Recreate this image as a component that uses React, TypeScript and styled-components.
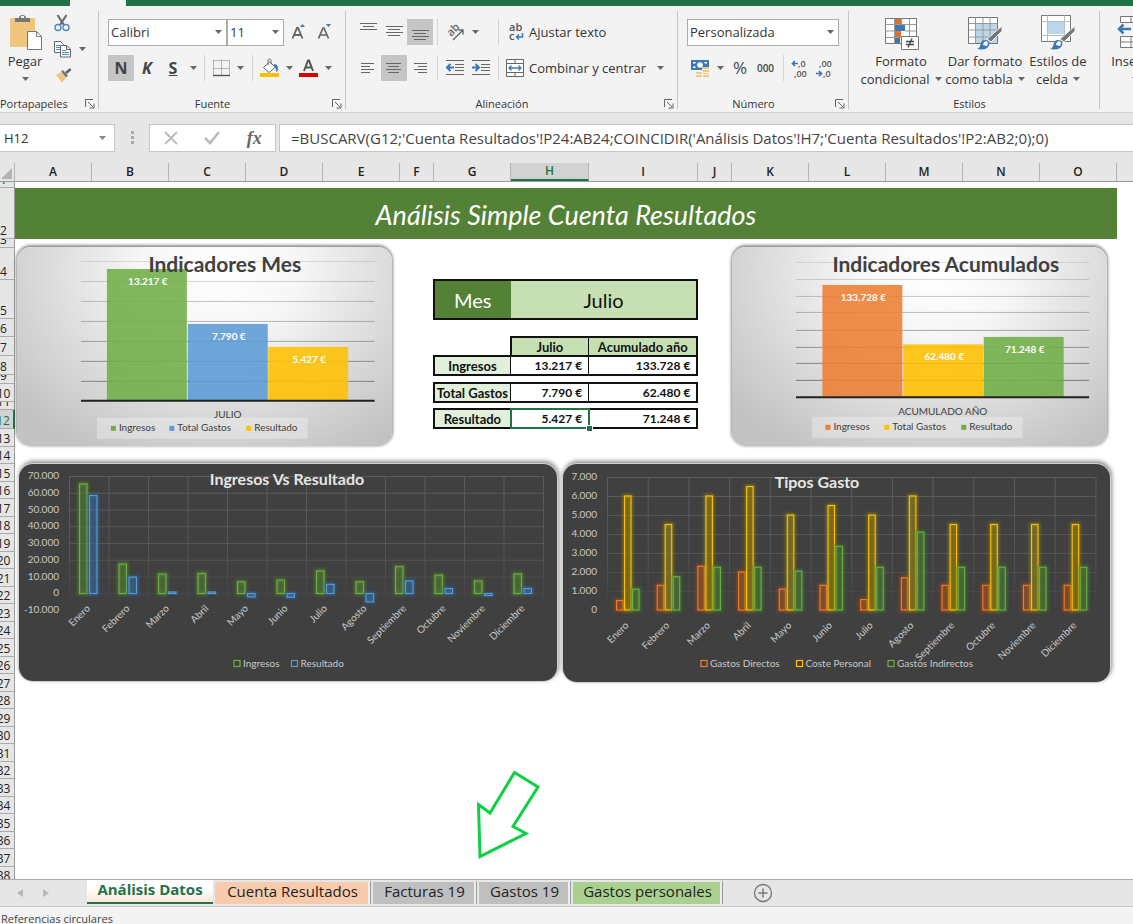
import React from "react";
import styled, { createGlobalStyle } from "styled-components";

const UI = '"Open Sans", "Noto Sans", sans-serif';
const CELL = 'Lato, "Open Sans", sans-serif';

const Global = createGlobalStyle`
  * { box-sizing: border-box; }
  body { margin: 0; background: #e6e6e6; font-family: ${UI}; color: #333; }
  button, input, select { font: inherit; color: inherit; margin: 0; }
`;

const Workbook = styled.div`
  display: flex;
  flex-direction: column;
  height: 100vh;
  overflow: hidden;
`;

/* ---------- ribbon ---------- */

const TitleStrip = styled.div`
  display: flex;
  flex: none;
  height: 6px;
  background: #217346;
  padding-left: 70px;
`;

const OpenTab = styled.div`
  width: 56px;
  background: #f3f3f3;
`;

const Ribbon = styled.div`
  display: flex;
  flex: none;
  height: 107px;
  background: #f3f3f3;
  border-bottom: 1px solid #d2d2d2;
  padding: 5px 0 0;
  overflow: hidden;
`;

const Group = styled.section<{ $w: number }>`
  display: flex;
  flex-direction: column;
  flex: none;
  width: ${(p) => p.$w}px;
  height: 98px;
  border-right: 1px solid #c6c6c6;
`;

const GroupBody = styled.div<{ $pad: number; $top?: number }>`
  display: flex;
  flex: none;
  height: 85px;
  padding: ${(p) => p.$top ?? 8}px 0 0 ${(p) => p.$pad}px;
`;

const Rows = styled.div`
  display: flex;
  flex-direction: column;
  gap: 10px;
`;

const Row = styled.div`
  display: flex;
  align-items: center;
  height: 26px;
`;

const GroupFoot = styled.div`
  display: flex;
  align-items: center;
  justify-content: center;
  height: 16px;
  padding: 0 3px 0 0;
  font-size: 11px;
  line-height: 16px;
  color: #333;
`;

const FootLabel = styled.span<{ $left?: boolean }>`
  flex: 1;
  padding-right: 6px;
  white-space: nowrap;
  text-align: ${(p) => (p.$left ? "left" : "center")};
`;

const Tool = styled.button<{ $w?: number; $h?: number; $on?: boolean }>`
  display: flex;
  align-items: center;
  justify-content: center;
  flex: none;
  width: ${(p) => p.$w ?? 26}px;
  height: ${(p) => p.$h ?? 26}px;
  padding: 0;
  border: 0;
  background: ${(p) => (p.$on ? "#c5c5c5" : "transparent")};
  font-size: 16px;
  line-height: 20px;
  font-weight: 700;
  color: #444;
`;

const TextTool = styled.button`
  display: flex;
  align-items: center;
  gap: 5px;
  height: 26px;
  padding: 0;
  border: 0;
  background: transparent;
  font-size: 13px;
  line-height: 18px;
  color: #333;
  white-space: nowrap;
`;

const Sep = styled.span<{ $l: number; $r: number }>`
  flex: none;
  width: 1px;
  height: 26px;
  margin: 0 ${(p) => p.$r}px 0 ${(p) => p.$l}px;
  background: #d4d4d4;
`;

const Picker = styled.label<{ $w: number }>`
  display: grid;
  grid-template-columns: 1fr 16px;
  align-items: center;
  flex: none;
  width: ${(p) => p.$w}px;
  height: 27px;
  border: 1px solid #ababab;
  background: #fff;
  select, input {
    grid-area: 1 / 1 / 2 / 3;
    width: 100%;
    height: 25px;
    padding: 0 0 0 2px;
    border: 0;
    outline: 0;
    background: transparent;
    appearance: none;
    font-size: 13px;
    color: #333;
  }
  svg { grid-area: 1 / 2; justify-self: center; pointer-events: none; }
`;

const BigTool = styled.button<{ $w: number }>`
  display: flex;
  flex-direction: column;
  align-items: center;
  flex: none;
  width: ${(p) => p.$w}px;
  height: 80px;
  padding: 3px 0 0;
  border: 0;
  background: transparent;
  font-size: 13px;
  line-height: 18px;
  color: #333;
  white-space: nowrap;
  svg { flex: none; }
`;

const BigLine = styled.span`
  display: flex;
  align-items: center;
  gap: 5px;
`;

const CaretLine = styled(BigLine)`
  height: 18px;
`;

const Stack = styled.div`
  display: flex;
  flex-direction: column;
  gap: 2px;
`;

const StackRow = styled(Row)`
  height: 24px;
`;

const PercentText = styled.span`
  font-size: 17px;
  line-height: 20px;
  font-weight: 400;
`;

const ThousandText = styled.span`
  font-size: 10px;
  line-height: 14px;
  font-weight: 600;
`;

const Caret = ({ c = "#666" }: { c?: string }) => (
  <svg width="7" height="4" viewBox="0 0 7 4"><path d="M0 0h7L3.5 4z" fill={c} /></svg>
);

const Launcher = () => (
  <svg width="10" height="10" viewBox="0 0 10 10" fill="none" stroke="#666">
    <path d="M.5 8V.5H8M3 3l5 5M9 4.500V9H4.500" />
  </svg>
);

const Lines = ({ spec }: { spec: [number, number, number][] }) => (
  <svg width="20" height="20" viewBox="0 0 20 20" stroke="#666">
    {spec.map(([x, y, w], i) => <path key={i} d={`M${x} ${y}.5h${w}`} />)}
  </svg>
);

const PasteIcon = () => (
  <svg width="36" height="38" viewBox="0 0 36 38">
    <path d="M3 4h25v29H3z" fill="#eec67e" />
    <path d="M8 8V4h4c0-4 7-4 7 0h4v4z" fill="#777" />
    <rect x="14" y="2" width="3" height="2" fill="#f3f3f3" />
    <path d="M20.500 17.500h9l5 5v13h-14z" fill="#fff" stroke="#777" />
    <path d="M29.500 17.500v5h5" fill="none" stroke="#777" />
  </svg>
);

const CutIcon = () => (
  <svg width="16" height="18" viewBox="0 0 16 18" fill="none">
    <path d="M3.500 1l6.500 10M12.500 1L6 11" stroke="#666" strokeWidth="2" />
    <circle cx="4" cy="13.500" r="3" stroke="#4a8ac4" strokeWidth="1.400" />
    <circle cx="12" cy="13.500" r="3" stroke="#4a8ac4" strokeWidth="1.400" />
  </svg>
);

const CopyIcon = () => (
  <svg width="17" height="18" viewBox="0 0 17 18" fill="#fff" stroke="#666">
    <path d="M.5 1.500h6l3 3v8h-9z" />
    <path d="M2 5.500h4M2 7.500h4M2 9.500h4" stroke="#4a8ac4" />
    <path d="M6.500 5.500h6l4 3.500v8h-10z" />
    <path d="M12.500 5.500v4h4" fill="none" />
    <path d="M8 10.500h4M8 12.500h7M8 14.500h7" stroke="#4a8ac4" />
  </svg>
);

const BrushIcon = () => (
  <svg width="17" height="16" viewBox="0 0 17 16">
    <path d="M1 8l5-3 5 6-4 4.500z" fill="#eec67e" />
    <path d="M6 4.500l2-1.500 5 5.500-2 2z" fill="#777" />
    <path d="M10 5l5-4 1.500 2-4.500 4z" fill="#666" />
  </svg>
);

const GrowIcon = ({ up }: { up?: boolean }) => (
  <svg width="16" height="18" viewBox="0 0 16 18">
    <path d="M2.500 15.500L7 5h1l4.500 10.500M4.500 12h6" fill="none" stroke="#666" strokeWidth={up ? 1.9 : 1.7} />
    <path d={up ? "M10 4h5l-2.500-3z" : "M10 1h5l-2.500 3z"} fill="#3c78b4" />
  </svg>
);

const BordersIcon = () => (
  <svg width="17" height="17" viewBox="0 0 17 17" fill="none" stroke="#777">
    <path d="M.5 .5h16M.5 .5v15M16.500 .5v15M8.500 .5v15M.5 8.500h16" strokeDasharray="1 1" />
    <path d="M0 15.500h17" stroke="#555" strokeWidth="1.400" />
  </svg>
);

const FillIcon = () => (
  <svg width="20" height="20" viewBox="0 0 20 20">
    <path d="M3.500 9.500l6-5.500 6 5-6.500 5.500z" fill="#fff" stroke="#666" />
    <path d="M8 7V2.500c0-2 3-2 3 0V6" fill="none" stroke="#666" />
    <path d="M14 6c4 0 5 4 3 8-2-1 0-4-3-5z" fill="#3c78b4" />
    <path d="M0 15h19v4H0z" fill="#f7c000" />
  </svg>
);

const FontColorIcon = () => (
  <svg width="20" height="20" viewBox="0 0 20 20">
    <path d="M5 13L9 2.500h1L14 13M6.500 9.500h6" fill="none" stroke="#555" strokeWidth="2" />
    <path d="M0 15h19v4H0z" fill="#d80000" />
  </svg>
);

const AngleIcon = () => (
  <svg width="22" height="22" viewBox="-2 -2 22 22">
    <text x="0" y="0" transform="translate(5 14) rotate(-45)" fontSize="11" fontWeight="600" fill="#666">ab</text>
    <path d="M7 17L17 7M12.500 7H17v4.500" fill="none" stroke="#666" strokeWidth="1.400" />
  </svg>
);

const WrapIcon = () => (
  <svg width="16" height="24" viewBox="0 -2 16 24">
    <text x="1" y="9" fontSize="11" fontWeight="600" fill="#555">ab</text>
    <text x="1" y="18" fontSize="11" fontWeight="600" fill="#555">c</text>
    <path d="M14.500 11v4H8.500M11 12.500L8.500 15l2.500 2.500" fill="none" stroke="#3c78b4" strokeWidth="1.500" />
  </svg>
);

const MergeIcon = () => (
  <svg width="18" height="19" viewBox="0 0 18 19" fill="none" stroke="#666">
    <path d="M.5 .5h17v17H.5z" fill="#fff" />
    <path d="M.5 4.500h17M.5 13.500h17M9 .5v4M9 13.500v4" />
    <path d="M3 9h12M5.500 6.500L3 9l2.500 2.500M12.500 6.500L15 9l-2.500 2.500" stroke="#3c78b4" strokeWidth="1.300" />
  </svg>
);

const IndentIcon = ({ out }: { out?: boolean }) => (
  <svg width="18" height="18" viewBox="0 0 18 18" stroke="#666" fill="none">
    <path d="M0 1.500h18M9 5.500h9M9 8.500h9M9 11.500h9M0 15.500h18" />
    <path d={out ? "M8 8.500H1.500M4.500 5L1 8.500 4.500 12" : "M0 8.500h6.500M3.500 5L7 8.500 3.500 12"} stroke="#3c78b4" strokeWidth="2" />
  </svg>
);

const MoneyIcon = () => (
  <svg width="20" height="19" viewBox="0 0 20 19">
    <path d="M1 1h18v10H1z" fill="#3c78b4" />
    <path d="M3 3h2.500v1.500H3zM14.500 3H17v1.500h-2.500zM3 7.500h2.500V9H3z" fill="#fff" />
    <circle cx="10" cy="6" r="2.800" fill="#fff" />
    <path d="M12 8h7v10h-6v-6h-1zM6 13h6v5H6z" fill="#f3c98b" />
    <path d="M12 10.500h7M12 13.500h7M6 15.500h13M12.500 12v6" stroke="#f3f3f3" />
  </svg>
);

const DecimalIcon = ({ add }: { add?: boolean }) => (
  <svg width="20" height="22" viewBox="0 -2 20 22">
    <text x={add ? 7 : 3} y="8" fontSize="9" fontWeight="600" fill="#555">{add ? ",0" : ",00"}</text>
    <text x={add ? 3 : 7} y="18" fontSize="9" fontWeight="600" fill="#555">{add ? ",00" : ",0"}</text>
    <path
      d={add ? "M7 4.500H1.500M4 2L1.500 4.500 4 7" : "M0 14.500h5.500M3 12l2.500 2.500L3 17"}
      fill="none" stroke="#3c78b4" strokeWidth="1.700"
    />
  </svg>
);

const CondIcon = () => (
  <svg width="36" height="38" viewBox="0 0 36 38">
    <path d="M2.500 4.500h31v25h-31z" fill="#fff" stroke="#777" />
    <path d="M12 5h6v6h-6zM12 17h6v6h-6z" fill="#e07030" />
    <path d="M12 11h10v6H12zM12 23h5v6h-5z" fill="#3c78b4" />
    <path d="M2.500 10.500h31M2.500 17h9M22 17h11M2.500 23.500h31M11.500 4.500v25M18.500 4.500v6M26.500 4.500v25" stroke="#999" fill="none" />
    <path d="M18.500 22.500h17v13h-17z" fill="#fff" stroke="#777" />
    <path d="M23 27.500h8M23 30.500h8M29 24.500l-4 9" stroke="#444" strokeWidth="1.300" />
  </svg>
);

const Brush = () => (
  <>
    <path d="M35 12v5L24 28l-4-3z" fill="#777" stroke="#f3f3f3" />
    <path d="M10 35c5-1 2-9 8-9 5 0 6 5 2 8-3 2-7 1.500-10 1z" fill="#3c78b4" />
    <path d="M17 28c3-2 5 0 3 4l-4-1z" fill="#fff" />
  </>
);

const TableIcon = () => (
  <svg width="36" height="38" viewBox="0 0 36 38">
    <path d="M1.500 3.500h29v26h-29z" fill="#fff" stroke="#777" />
    <path d="M9 10h21v19H9z" fill="#bdd7ea" />
    <path d="M1.500 9.500h29M1.500 16h29M1.500 23h29M8.500 3.500v26M16 3.500v26M23 3.500v26" stroke="#999" fill="none" />
    <Brush />
  </svg>
);

const CellIcon = () => (
  <svg width="36" height="38" viewBox="0 0 36 38">
    <path d="M1.500 1.500h29v26h-29z" fill="#fff" stroke="#777" />
    <path d="M1.500 7.500h29M1.500 21.500h29M7.500 1.500v26M24.500 1.500v26" stroke="#bbb" />
    <path d="M8 8h16v12H8z" fill="#bdd7ea" />
    <Brush />
  </svg>
);

const InsertIcon = () => (
  <svg width="36" height="38" viewBox="0 0 36 38" fill="#fff" stroke="#777">
    <path d="M3.500 2.500h32v6h-32zM3.500 22.500h32v11h-32zM3.500 28h32M14 2.500v6M14 22.500v11" />
    <path d="M17 11.500h18v8H17z" fill="#bdd7ea" />
    <path d="M14 15H2M6.500 10.500L2 15l4.500 4.500" fill="none" stroke="#3c78b4" strokeWidth="2.500" />
  </svg>
);

/* ---------- formula bar ---------- */

const FormulaBar = styled.div`
  display: flex;
  align-items: center;
  flex: none;
  height: 50px;
  padding-bottom: 1px;
  background: #e6e6e6;
`;

const NameBox = styled(Picker)`
  height: 28px;
  border-color: #c6c6c6;
  border-left: 0;
  grid-template-columns: 1fr 24px;
  input { padding-left: 4px; }
`;

const Grip = styled.span`
  display: flex;
  justify-content: center;
  width: 34px;
`;

const FxBox = styled.div`
  display: flex;
  align-items: center;
  justify-content: space-around;
  flex: none;
  width: 127px;
  height: 28px;
  border: 1px solid #c6c6c6;
  background: #fff;
`;

const FxName = styled.span`
  font: italic 700 18px/20px "Liberation Serif", serif;
  color: #666;
`;

const Formula = styled.input`
  flex: 1;
  min-width: 0;
  height: 28px;
  margin-left: 3px;
  padding: 0 0 0 11px;
  border: 1px solid #c6c6c6;
  border-right: 0;
  outline: 0;
  background: #fff;
  && {
    margin-left: 3px;
    font-size: 15px;
    color: #444;
  }
`;

/* ---------- sheet ---------- */

const ColHeads = styled.div`
  display: grid;
  grid-template-columns: 15px repeat(5, 77px) 34px 77px 78px 109px 34px repeat(5, 77px) 1fr;
  flex: none;
  height: 19px;
  border-bottom: 1px solid #9b9b9b;
  overflow: hidden;
`;

const ColHead = styled.div<{ $on?: boolean }>`
  display: flex;
  align-items: center;
  justify-content: center;
  border-right: 1px solid #b4b4b4;
  border-bottom: ${(p) => (p.$on ? "2px solid #217346" : "0")};
  background: ${(p) => (p.$on ? "#d2d2d2" : "transparent")};
  font-size: 12px;
  line-height: 16px;
  font-weight: 600;
  color: ${(p) => (p.$on ? "#217346" : "#222")};
`;

const Corner = styled(ColHead)`
  align-items: flex-end;
  justify-content: flex-end;
  padding: 0 2px 2px 0;
`;

const SheetArea = styled.div`
  display: flex;
  flex: 1;
  min-height: 0;
  overflow: hidden;
  background: #fff;
`;

const RowHeads = styled.div`
  flex: none;
  width: 15px;
  background: #e6e6e6;
`;

const RowHead = styled.div<{ $h: number; $on?: boolean }>`
  display: flex;
  align-items: flex-end;
  justify-content: center;
  height: ${(p) => p.$h}px;
  padding-right: 7px;
  overflow: hidden;
  border-bottom: 1px solid #ababab;
  border-right: ${(p) => (p.$on ? "2px solid #217346" : "1px solid #9b9b9b")};
  background: ${(p) => (p.$on ? "#d2d2d2" : "transparent")};
  color: ${(p) => (p.$on ? "#217346" : "#222")};
  font-size: 12px;
  line-height: 15px;
`;

const Dashboard = styled.main`
  display: flex;
  flex-direction: column;
  flex: 1;
  min-width: 0;
  padding: 6px 16px 0 0;
`;

const Banner = styled.h1`
  flex: none;
  margin: 0;
  height: 51px;
  background: #538135;
  color: #fff;
  font: italic 400 27px/54px Lato, sans-serif;
  text-align: center;
`;

const Upper = styled.div`
  display: flex;
  justify-content: space-between;
  align-items: flex-start;
  padding: 8px 10px 0 2px;
`;

const Lower = styled.div`
  display: flex;
  align-items: flex-start;
  gap: 6px;
  padding: 18px 7px 0 4px;
`;

const LightCard = styled.figure`
  flex: 375 1 0;
  margin: 0;
  border-radius: 14px;
  overflow: hidden;
  background: radial-gradient(ellipse 70% 105% at 54% 12%, #fff 0%, #f6f6f6 30%, #d4d4d4 75%, #c2c2c2 100%);
  box-shadow: 0 -1px 3px 1px rgba(0, 0, 0, 0.45);
  svg { display: block; width: 100%; height: auto; }
`;

const DarkCard = styled(LightCard)<{ $grow: number }>`
  flex-grow: ${(p) => p.$grow};
  background: #404040;
  box-shadow: 0 0 0 1px #d0d0d0, 1px -2px 4px 1px rgba(0, 0, 0, 0.45);
`;

const Tables = styled.div`
  flex: 266 1 0;
  margin: 32px 34px 0 41px;
`;

const Month = styled.table`
  width: 100%;
  table-layout: fixed;
  border-collapse: collapse;
  border: 2px solid #111;
  font: 400 20px/24px ${CELL};
  color: #111;
  th, td { height: 39px; padding: 0; text-align: center; font-weight: 400; }
  th { width: 77px; background: #538135; color: #fff; }
  td { background: #c6e0b4; }
`;

const Summary = styled.table`
  width: 100%;
  margin-top: 16px;
  table-layout: fixed;
  border-collapse: collapse;
  font: 700 12px/14px ${CELL};
  color: #111;
  th { font-size: 13px; }
`;

const Line = styled.tr<{ $h: number }>`
  height: ${(p) => p.$h}px;
`;

const Head = styled.th`
  padding: 0;
  border: 2px solid #111;
  border-right-width: 1px;
  background: #c6e0b4;
  & + & { border-left-width: 1px; border-right-width: 2px; }
`;

const Name = styled.th`
  padding: 0;
  border: 2px solid #111;
  border-right-width: 1px;
  background: #e2efda;
  white-space: nowrap;
`;

const Value = styled.td<{ $last?: boolean }>`
  position: relative;
  padding: 0 6px 0 0;
  border: solid #111;
  border-width: 2px ${(p) => (p.$last ? 2 : 1)}px 2px 1px;
  text-align: right;
`;

const Selection = styled.span`
  position: absolute;
  inset: -2px -2px -2px -1px;
  border: 2px solid #217346;
  &::after {
    content: "";
    position: absolute;
    right: -4px;
    bottom: -4px;
    width: 5px;
    height: 5px;
    background: #217346;
    outline: 1px solid #fff;
  }
`;

const Blank = styled.td`
  padding: 0;
`;

const Pointer = styled.svg`
  display: block;
  flex: none;
  margin: 86px 0 0 459px;
`;

/* ---------- bottom ---------- */

const TabBar = styled.nav`
  display: flex;
  flex: none;
  height: 28px;
  background: #e6e6e6;
  border-top: 1px solid #ababab;
  border-bottom: 1px solid #c6c6c6;
`;

const TabNav = styled.div`
  display: flex;
  align-items: center;
  gap: 20px;
  width: 87px;
  padding-left: 17px;
`;

const SheetTab = styled.button<{ $bg: string; $w: number; $on?: boolean }>`
  flex: none;
  width: ${(p) => p.$w}px;
  height: 24px;
  padding: ${(p) => (p.$on ? "0 0 4px" : "0 0 6px")};
  border: solid #e6e6e6;
  border-width: ${(p) => (p.$on ? "0" : "2px 1px 0 2px")};
  border-right-color: #999;
  border-bottom: ${(p) => (p.$on ? "2px solid #217346" : "0")};
  box-shadow: ${(p) => (p.$on ? "none" : "inset -2px 0 #eee")};
  background: ${(p) => p.$bg};
  font-size: 15px;
  line-height: 18px;
  font-weight: ${(p) => (p.$on ? 700 : 400)};
  color: ${(p) => (p.$on ? "#217346" : "#222")};
  white-space: nowrap;
`;

const AddTab = styled.button`
  display: flex;
  margin-left: 30px;
  padding: 3px 0 0;
  border: 0;
  background: transparent;
`;

const Status = styled.footer`
  flex: none;
  height: 17px;
  padding: 4px 0 0 1px;
  overflow: hidden;
  background: #f3f3f3;
  font-size: 11px;
  line-height: 16px;
  color: #444;
`;

/* ---------- charts ---------- */

const Txt = styled.text<{ $size?: number }>`
  font-family: ${CELL};
  font-size: ${(p) => p.$size ?? 10}px;
`;

type Bar = { x: number; top: number; fill: string; label: string; name: string; lx: number };

type SummaryChartProps = {
  box: string; left: number; right: number; base: number; grid: number[];
  bars: Bar[]; title: string; titleX: number; caption: string; capX: number; capY: number; legendX: number; legendY: number;
};

function SummaryChart(p: SummaryChartProps) {
  return (
    <LightCard>
      <svg viewBox={p.box} role="img" aria-label={p.title}>
        {p.grid.map((y, i) => (
          <path key={y} d={`M${p.left} ${y}H${p.right}`} stroke="#555" strokeOpacity={0.16 + i * 0.08} />
        ))}
        {p.bars.map((b) => (
          <g key={b.name}>
            <rect x={b.x} y={b.top} width="80" height={p.base - b.top} fill={b.fill} fillOpacity="0.88" />
            <Txt x={b.x + 41} y={b.top + 16} textAnchor="middle" fontWeight="700" fill="#fff">{b.label}</Txt>
          </g>
        ))}
        <path d={`M${p.left} ${p.base + 0.5}H${p.right}`} stroke="#222" strokeWidth="2" />
        <Txt $size={21} x={p.titleX} y="272" textAnchor="middle" fontWeight="700" fill="#404040">{p.title}</Txt>
        <rect x={p.legendX} y={p.legendY - 13} width="211" height="21" fill="#f2f2f2" fillOpacity="0.4" />
        <Txt x={p.capX} y={p.capY} textAnchor="middle" fill="#404040">{p.caption}</Txt>
        {p.bars.map((b) => (
          <g key={b.name}>
            <rect x={b.lx} y={p.legendY - 5} width="5" height="5" fill={b.fill} />
            <Txt x={b.lx + 8} y={p.legendY} fill="#404040">{b.name}</Txt>
          </g>
        ))}
      </svg>
    </LightCard>
  );
}

const MONTHS = ["Enero", "Febrero", "Marzo", "Abril", "Mayo", "Junio", "Julio", "Agosto", "Septiembre", "Octubre", "Noviembre", "Diciembre"];

type Series = { name: string; color: string; glow: string; data: number[]; dx: number; lx: number };

type MonthChartProps = {
  id: string; grow: number; box: string; left: number; step: number; top: number; unit: number; ticks: string[];
  zero: number; scale: number; barW: number; series: Series[]; title: string; titleX: number; titleY: number; monthY: number;
};

function MonthChart(p: MonthChartProps) {
  const right = p.left + p.step * 12;
  const bottom = p.top + p.unit * (p.ticks.length - 1);
  return (
    <DarkCard $grow={p.grow}>
      <svg viewBox={p.box} role="img" aria-label={p.title}>
        <defs>
          <filter id={`${p.id}-glow`} x="-150%" y="-50%" width="400%" height="200%" filterUnits="objectBoundingBox">
            <feGaussianBlur stdDeviation="1.600" />
          </filter>
          <linearGradient id={`${p.id}-fade`} gradientUnits="userSpaceOnUse" x1="0" x2="0" y1={p.top} y2={bottom}>
            <stop offset="0" stopColor="#5c5c5c" />
            <stop offset="0.600" stopColor="#545454" />
            <stop offset="1" stopColor="#404040" />
          </linearGradient>
        </defs>
        <g fill={`url(#${p.id}-fade)`}>
          {p.ticks.map((t, i) => <rect key={t} x={p.left} y={p.top + p.unit * i} width={right - p.left} height="1" />)}
          {Array.from({ length: 13 }, (_, i) => (
            <rect key={i} x={p.left + p.step * i} y={p.top} width="1" height={bottom - p.top} />
          ))}
        </g>
        {p.ticks.map((t, i) => (
          <Txt key={t} x={p.left - 10} y={p.top + p.unit * i + 3} textAnchor="end" fill="#c8c8c8">{t}</Txt>
        ))}
        {p.series.map((s) =>
          s.data.map((v, i) => {
            const h = Math.max(Math.abs(v) * p.scale, 1.5);
            const box = {
              x: p.left + p.step * i + s.dx,
              y: v < 0 ? p.zero : p.zero - h,
              width: p.barW,
              height: h,
            };
            return (
              <g key={`${s.name}${i}`}>
                <rect {...box} fill={s.glow} fillOpacity="0.2" stroke={s.glow} strokeWidth="4" strokeOpacity="0.6" filter={`url(#${p.id}-glow)`} />
                <rect {...box} fill={s.color} fillOpacity="0.12" stroke={s.color} strokeWidth="1.100" />
              </g>
            );
          })
        )}
        {MONTHS.map((m, i) => (
          <Txt
            key={m}
            transform={`translate(${p.left + p.step * (i + 0.5) + 2} ${p.monthY}) rotate(-45)`}
            textAnchor="end"
            fill="#c8c8c8"
          >
            {m}
          </Txt>
        ))}
        <Txt $size={16} x={p.titleX} y={p.titleY} textAnchor="middle" fontWeight="700" fill="#e6e6e6">{p.title}</Txt>
        {p.series.map((s) => (
          <g key={s.name}>
            <rect x={s.lx} y="660.500" width="6" height="6" fill="none" stroke={s.color} strokeWidth="1.200" />
            <Txt x={s.lx + 9} y="666.500" fill="#c8c8c8">{s.name}</Txt>
          </g>
        ))}
      </svg>
    </DarkCard>
  );
}

const GREEN = "#70ad47", BLUE = "#5b9bd5", YELLOW = "#ffc000", ORANGE = "#ed7d31";

const ROW_HEIGHTS = [
  6, 51, 9, 32, 39, 18, 19, 19, 9, 18, 8, 19, 18, 17,
  ...Array.from({ length: 24 }, (_, i) => (i % 2 ? 17 : 18)),
];

export default function App() {
  return (
    <Workbook>
      <Global />
      <TitleStrip><OpenTab /></TitleStrip>
      <Ribbon>
        <Group $w={99}>
          <GroupBody $pad={5} $top={0}>
            <BigTool $w={40}>
              <PasteIcon />
              <span>Pegar</span>
              <CaretLine><Caret /></CaretLine>
            </BigTool>
            <Stack>
              <Tool $w={34} $h={24} aria-label="Cortar"><CutIcon /></Tool>
              <StackRow>
                <Tool $w={34} $h={24} aria-label="Copiar"><CopyIcon /></Tool>
                <Caret />
              </StackRow>
              <Tool $w={36} $h={24} aria-label="Copiar formato"><BrushIcon /></Tool>
            </Stack>
          </GroupBody>
          <GroupFoot><FootLabel $left>Portapapeles</FootLabel><Launcher /></GroupFoot>
        </Group>

        <Group $w={247}>
          <GroupBody $pad={9}>
            <Rows>
              <Row>
                <Picker $w={119}>
                  <select aria-label="Fuente"><option>Calibri</option></select><Caret />
                </Picker>
                <Picker $w={57}>
                  <select aria-label="Tamaño"><option>11</option></select><Caret />
                </Picker>
                <Tool $w={28} aria-label="Aumentar fuente"><GrowIcon up /></Tool>
                <Tool $w={24} aria-label="Disminuir fuente"><GrowIcon /></Tool>
              </Row>
              <Row>
                <Tool $on>N</Tool>
                <Tool><i>K</i></Tool>
                <Tool><u>S</u></Tool>
                <Tool $w={14} aria-label="Subrayado"><Caret /></Tool>
                <Sep $l={4} $r={4} />
                <Tool $w={24} aria-label="Bordes"><BordersIcon /></Tool>
                <Tool $w={14} aria-label="Más bordes"><Caret /></Tool>
                <Sep $l={5} $r={5} />
                <Tool $w={24} aria-label="Relleno"><FillIcon /></Tool>
                <Tool $w={14} aria-label="Más rellenos"><Caret /></Tool>
                <Tool $w={26} aria-label="Color de fuente"><FontColorIcon /></Tool>
                <Tool $w={12} aria-label="Más colores"><Caret /></Tool>
              </Row>
            </Rows>
          </GroupBody>
          <GroupFoot><FootLabel>Fuente</FootLabel><Launcher /></GroupFoot>
        </Group>

        <Group $w={332}>
          <GroupBody $pad={9}>
            <Rows>
              <Row>
                <Tool aria-label="Arriba"><Lines spec={[[2, 1, 17], [5, 4, 11], [2, 7, 17]]} /></Tool>
                <Tool aria-label="Medio"><Lines spec={[[2, 4, 17], [4, 7, 12], [2, 10, 17], [4, 13, 12]]} /></Tool>
                <Tool $on aria-label="Abajo"><Lines spec={[[2, 8, 17], [4, 11, 12], [2, 14, 17], [4, 17, 12]]} /></Tool>
                <Sep $l={4} $r={4} />
                <Tool $w={26} aria-label="Orientación"><AngleIcon /></Tool>
                <Tool $w={14} aria-label="Más orientación"><Caret /></Tool>
                <Sep $l={16} $r={9} />
                <TextTool><WrapIcon />Ajustar texto</TextTool>
              </Row>
              <Row>
                <Tool aria-label="Izquierda"><Lines spec={[[3, 5, 13], [3, 8, 9], [3, 11, 13], [3, 14, 9]]} /></Tool>
                <Tool $on aria-label="Centro"><Lines spec={[[2, 5, 15], [4, 8, 11], [2, 11, 15], [4, 14, 11]]} /></Tool>
                <Tool aria-label="Derecha"><Lines spec={[[4, 5, 13], [8, 8, 9], [4, 11, 13], [8, 14, 9]]} /></Tool>
                <Sep $l={4} $r={4} />
                <Tool aria-label="Disminuir sangría"><IndentIcon out /></Tool>
                <Tool aria-label="Aumentar sangría"><IndentIcon /></Tool>
                <Sep $l={4} $r={7} />
                <TextTool><MergeIcon />Combinar y centrar</TextTool>
                <Tool $w={28} aria-label="Más combinar"><Caret /></Tool>
              </Row>
            </Rows>
          </GroupBody>
          <GroupFoot><FootLabel>Alineación</FootLabel><Launcher /></GroupFoot>
        </Group>

        <Group $w={171}>
          <GroupBody $pad={9}>
            <Rows>
              <Row>
                <Picker $w={152}>
                  <select aria-label="Formato de número"><option>Personalizada</option></select><Caret />
                </Picker>
              </Row>
              <Row>
                <Tool $w={26} aria-label="Moneda"><MoneyIcon /></Tool>
                <Tool $w={14} aria-label="Más monedas"><Caret /></Tool>
                <Tool $w={26}><PercentText>%</PercentText></Tool>
                <Tool $w={25}><ThousandText>000</ThousandText></Tool>
                <Sep $l={5} $r={5} />
                <Tool $w={24} aria-label="Aumentar decimales"><DecimalIcon add /></Tool>
                <Tool $w={26} aria-label="Disminuir decimales"><DecimalIcon /></Tool>
              </Row>
            </Rows>
          </GroupBody>
          <GroupFoot><FootLabel>Número</FootLabel><Launcher /></GroupFoot>
        </Group>

        <Group $w={251}>
          <GroupBody $pad={8} $top={0}>
            <BigTool $w={88}><CondIcon /><span>Formato</span><BigLine>condicional <Caret /></BigLine></BigTool>
            <BigTool $w={80}><TableIcon /><span>Dar formato</span><BigLine>como tabla <Caret /></BigLine></BigTool>
            <BigTool $w={66}><CellIcon /><span>Estilos de</span><BigLine>celda <Caret /></BigLine></BigTool>
          </GroupBody>
          <GroupFoot><FootLabel>Estilos</FootLabel></GroupFoot>
        </Group>

        <Group $w={80}>
          <GroupBody $pad={8} $top={0}>
            <BigTool $w={54}><InsertIcon /><span>Insertar</span><CaretLine><Caret /></CaretLine></BigTool>
          </GroupBody>
        </Group>
      </Ribbon>

      <FormulaBar>
        <NameBox $w={115}>
          <input aria-label="Cuadro de nombres" defaultValue="H12" /><Caret c="#888" />
        </NameBox>
        <Grip>
          <svg width="3" height="14" viewBox="0 0 3 14" fill="#aaa"><path d="M0 0h3v3H0zM0 5h3v3H0zM0 10h3v3H0z" /></svg>
        </Grip>
        <FxBox>
          <Tool aria-label="Cancelar">
            <svg width="14" height="14" viewBox="0 0 14 14" stroke="#bbb" strokeWidth="1.800"><path d="M1 1l12 12M13 1L1 13" /></svg>
          </Tool>
          <Tool aria-label="Introducir">
            <svg width="16" height="14" viewBox="0 0 16 14" fill="none" stroke="#bbb" strokeWidth="2.600"><path d="M1 7l5 5 9-11" /></svg>
          </Tool>
          <Tool aria-label="Insertar función"><FxName>fx</FxName></Tool>
        </FxBox>
        <Formula
          aria-label="Barra de fórmulas"
          defaultValue="=BUSCARV(G12;'Cuenta Resultados'!P24:AB24;COINCIDIR('Análisis Datos'!H7;'Cuenta Resultados'!P2:AB2;0);0)"
        />
      </FormulaBar>

      <ColHeads>
        <Corner><svg width="11" height="11" viewBox="0 0 11 11"><path d="M11 0v11H0z" fill="#b4b4b4" /></svg></Corner>
        {"ABCDEFGHIJKLMNO".split("").map((c) => <ColHead key={c} $on={c === "H"}>{c}</ColHead>)}
      </ColHeads>

      <SheetArea>
        <RowHeads>
          {ROW_HEIGHTS.map((h, i) => <RowHead key={i} $h={h} $on={i === 11}>{i + 1}</RowHead>)}
        </RowHeads>
        <Dashboard>
          <Banner>Análisis Simple Cuenta Resultados</Banner>
          <Upper>
            <SummaryChart
              box="17 247 375 199" left={81} right={375} base={400.5}
              grid={[261.5, 281.5, 301.5, 321.5, 341.5, 361.5, 381.5]}
              title="Indicadores Mes" titleX={225} caption="JULIO" capX={228} capY={418.5} legendX={97} legendY={431}
              bars={[
                { x: 107, top: 269, fill: GREEN, label: "13.217 €", name: "Ingresos", lx: 111 },
                { x: 188, top: 324, fill: BLUE, label: "7.790 €", name: "Total Gastos", lx: 169.5 },
                { x: 268.5, top: 347, fill: YELLOW, label: "5.427 €", name: "Resultado", lx: 246.5 },
              ]}
            />
            <Tables>
              <Month>
                <tbody><tr><th scope="row">Mes</th><td>Julio</td></tr></tbody>
              </Month>
              <Summary>
                <colgroup><col width="77" /><col width="78" /><col /></colgroup>
                <tbody>
                  <Line $h={19}><Blank /><Head scope="col">Julio</Head><Head scope="col">Acumulado año</Head></Line>
                  <Line $h={19}><Name scope="row">Ingresos</Name><Value>13.217 €</Value><Value $last>133.728 €</Value></Line>
                  <Line $h={8}><Blank colSpan={3} /></Line>
                  <Line $h={19}><Name scope="row">Total Gastos</Name><Value>7.790 €</Value><Value $last>62.480 €</Value></Line>
                  <Line $h={7}><Blank colSpan={3} /></Line>
                  <Line $h={19}><Name scope="row">Resultado</Name><Value>5.427 €<Selection /></Value><Value $last>71.248 €</Value></Line>
                </tbody>
              </Summary>
            </Tables>
            <SummaryChart
              box="733 247 375 199" left={797} right={1090.5} base={397}
              grid={[262.5, 279.5, 296.5, 312.5, 330.5, 347.5, 363.5, 380.5]}
              title="Indicadores Acumulados" titleX={947} caption="ACUMULADO AÑO" capX={944} capY={415} legendX={813} legendY={430}
              bars={[
                { x: 823.5, top: 285, fill: ORANGE, label: "133.728 €", name: "Ingresos", lx: 826.5 },
                { x: 904.5, top: 344.5, fill: YELLOW, label: "62.480 €", name: "Total Gastos", lx: 885.5 },
                { x: 985, top: 337, fill: GREEN, label: "71.248 €", name: "Resultado", lx: 962.5 },
              ]}
            />
          </Upper>
          <Lower>
            <MonthChart
              id="income" grow={538} box="19 464 538 217" left={69} step={39.5} top={476} unit={16.75}
              ticks={["70.000", "60.000", "50.000", "40.000", "30.000", "20.000", "10.000", "0", "-10.000"]}
              zero={593.5} scale={1.675} barW={7.5} title="Ingresos Vs Resultado" titleX={287} titleY={485} monthY={609}
              series={[
                { name: "Ingresos", color: GREEN, glow: "#4f8a24", dx: 10.5, lx: 234, data: [65.4, 17.6, 11.6, 12, 7, 8, 13.5, 7, 16, 11, 7.5, 11.7] },
                { name: "Resultado", color: BLUE, glow: "#2a68a8", dx: 20.5, lx: 291.5, data: [58.5, 9.8, 0.8, 0.8, -2, -2.2, 5.5, -5, 7.5, 3, -1.2, 3] },
              ]}
            />
            <MonthChart
              id="costs" grow={547} box="563 464 547 218" left={607} step={40.7} top={477} unit={19}
              ticks={["7.000", "6.000", "5.000", "4.000", "3.000", "2.000", "1.000", "0"]}
              zero={610} scale={19} barW={6.5} title="Tipos Gasto" titleX={817} titleY={488} monthY={626}
              series={[
                { name: "Gastos Directos", color: ORANGE, glow: "#a84a10", dx: 9.5, lx: 701, data: [0.5, 1.3, 2.3, 2, 1.1, 1.3, 0.55, 1.7, 1.3, 1.3, 1.3, 1.3] },
                { name: "Coste Personal", color: YELLOW, glow: "#98880c", dx: 17.5, lx: 796.5, data: [6, 4.5, 6, 6.5, 5, 5.5, 5, 6, 4.5, 4.5, 4.5, 4.5] },
                { name: "Gastos Indirectos", color: GREEN, glow: "#3c8428", dx: 25.5, lx: 888, data: [1.1, 1.75, 2.25, 2.25, 2.05, 3.35, 2.25, 4.1, 2.25, 2.25, 2.25, 2.25] },
              ]}
            />
          </Lower>
          <Pointer width="68" height="92" viewBox="474 768 68 92">
            <path d="M514.500 772.500L538 787 513 826.500 526 833.500 480 856.500 478.500 804.500 490 813z" fill="#fff" stroke="#0fd044" strokeWidth="3" />
          </Pointer>
        </Dashboard>
      </SheetArea>

      <TabBar>
        <TabNav>
          <svg width="6" height="8" viewBox="0 0 6 8"><path d="M6 0v8L0 4z" fill="#b8b8b8" /></svg>
          <svg width="6" height="8" viewBox="0 0 6 8"><path d="M0 0v8l6-4z" fill="#b8b8b8" /></svg>
        </TabNav>
        <SheetTab $w={126} $on $bg="linear-gradient(#fff 40%, #fbe5d6)">Análisis Datos</SheetTab>
        <SheetTab $w={158} $bg="#f8cbad">Cuenta Resultados</SheetTab>
        <SheetTab $w={106} $bg="#bfbfbf">Facturas 19</SheetTab>
        <SheetTab $w={94} $bg="#bfbfbf">Gastos 19</SheetTab>
        <SheetTab $w={152} $bg="#a9d08e">Gastos personales</SheetTab>
        <AddTab aria-label="Hoja nueva">
          <svg width="20" height="20" viewBox="0 0 20 20" fill="none" stroke="#777">
            <circle cx="10" cy="10" r="8.500" strokeWidth="1.300" />
            <path d="M5.500 10h9M10 5.500v9" strokeWidth="1.500" />
          </svg>
        </AddTab>
      </TabBar>
      <Status>Referencias circulares</Status>
    </Workbook>
  );
}
